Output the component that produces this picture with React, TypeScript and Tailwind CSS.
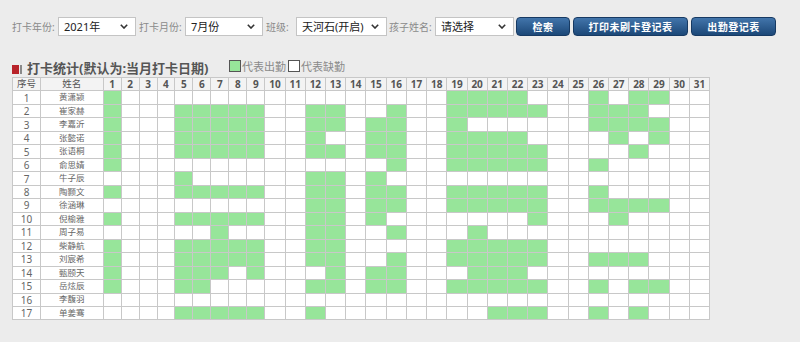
import React from "react";

const FONT = { fontFamily: '"Noto Sans", "Noto Sans CJK SC", sans-serif' };

const names = [
  "黄潇颍", "崔家赫", "李嘉沂", "张懿诺", "张语桐", "俞思婧", "牛子辰", "陶颢文", "徐涵琳",
  "倪榆雅", "周子易", "柴静航", "刘宸希", "甄颐天", "岳炫辰", "李馥羽", "单姜骞",
];

const specs = [
  "1,19-22,26,28,29",
  "1,5-9,12,13,16,19-23,26-28",
  "1,5-9,12,13,15,16,19,26-29",
  "1,5-9,12,15,16,19-22,27,29",
  "1,5-9,12,13,15,16,19-23,28",
  "1,16,19-23,26",
  "5,12,13,15",
  "1,5-9,12,13,15,16,19-23,26",
  "12,13,15,16,19-23,26-29",
  "1,5-9,12,13,15,23,27",
  "7,12,13,16,20",
  "1,5-9,12,13,19-23",
  "1,5-9,12,13,16,19-23,26-28",
  "1,5-7,9,13,15,16,20-22",
  "1,5,6,12,13,15,16,19-23,26,28,29",
  "",
  "5-9,12,21-23,26,28",
];

function parse(s: string): Set<number> {
  const out = new Set<number>();
  if (!s) return out;
  s.split(",").forEach((p) => {
    const [a, b] = p.split("-").map(Number);
    if (b === undefined) out.add(a);
    else for (let i = a; i <= b; i++) out.add(i);
  });
  return out;
}

const days = Array.from({ length: 31 }, (_, i) => i + 1);

function Chevron() {
  return (
    <svg width="8" height="5" viewBox="0 0 8 5" className="shrink-0">
      <polyline points="0.8,0.8 4,4 7.2,0.8" fill="none" stroke="#333" strokeWidth="1.6" />
    </svg>
  );
}

function Select({ w, text }: { w: string; text: string }) {
  return (
    <div
      className={`${w} h-[19px] bg-white border border-[#c4c4c4] flex items-center justify-between pl-[5px] pr-[7px] text-[11px] text-[#222] leading-none`}
    >
      <span>{text}</span>
      <Chevron />
    </div>
  );
}

function Btn({ w, text, ml }: { w: string; text: string; ml: string }) {
  return (
    <div
      className={`${w} ${ml} h-[19px] rounded-[4px] border border-[#173a63] bg-linear-to-b from-[#4275ab] to-[#1c4878] flex items-center justify-center text-white text-[10px] font-bold tracking-[0.5px] leading-none`}
    >
      {text}
    </div>
  );
}

export default function App() {
  return (
    <div className="w-[800px] h-[342px] bg-[#ececec] overflow-hidden" style={FONT}>
      {/* filter bar */}
      <div className="flex items-center pl-[12px] pt-[17px] h-[36px]">
        <span className="w-[46px] text-[10px] text-[#8a8a8a] leading-none">打卡年份:</span>
        <Select w="w-[78px]" text="2021年" />
        <span className="w-[49px] pl-[3px] text-[10px] text-[#8a8a8a] leading-none">打卡月份:</span>
        <Select w="w-[78px]" text="7月份" />
        <span className="w-[33px] pl-[3px] text-[10px] text-[#8a8a8a] leading-none">班级:</span>
        <Select w="w-[91px]" text="天河石(开启)" />
        <span className="w-[48px] pl-[2px] text-[10px] text-[#8a8a8a] leading-none">孩子姓名:</span>
        <Select w="w-[79px]" text="请选择" />
        <Btn w="w-[54px]" ml="ml-[2px]" text="检索" />
        <Btn w="w-[115px]" ml="ml-[3px]" text="打印未刷卡登记表" />
        <Btn w="w-[85px]" ml="ml-[3px]" text="出勤登记表" />
      </div>

      {/* title row */}
      <div className="flex items-end h-[18px] mt-[23px] pl-[12px]">
        <div className="flex items-center h-[18px] w-[15px]">
          <div className="w-[7px] h-[9px] bg-[#b8232a] mt-[2px]" />
          <div className="w-[2px] h-[9px] bg-[#8a8a8a] ml-px mt-[2px]" />
        </div>
        <span className="w-[202px] text-[13px] font-bold text-[#555] leading-[18px] whitespace-nowrap">
          打卡统计(默认为:当月打卡日期)
        </span>
        <div className="flex items-center h-[18px] mb-[2px]">
          <div className="w-[12px] h-[12px] bg-[#97e59a] border border-[#555]" />
          <span className="text-[11px] text-[#8a8a8a] leading-none ml-px">代表出勤</span>
          <div className="w-[12px] h-[12px] bg-white border border-[#555] ml-[2px]" />
          <span className="text-[11px] text-[#8a8a8a] leading-none ml-px">代表缺勤</span>
        </div>
      </div>

      {/* table */}
      <div className="ml-[12px] w-fit grid gap-px p-px bg-[#c8c8c8] grid-cols-[27px_61.6px_repeat(9,16.97px)_repeat(22,19.23px)] auto-rows-[12.47px]">
        <div className="bg-[#f3f3f3] flex items-center justify-center text-[9.5px] text-[#555] leading-none">序号</div>
        <div className="bg-[#f3f3f3] flex items-center justify-center text-[9.5px] text-[#555] leading-none">姓名</div>
        {days.map((d) => (
          <div
            key={`h${d}`}
            className="bg-[#f3f3f3] flex items-center justify-center text-[10px] font-bold text-[#555] leading-none"
          >
            {d}
          </div>
        ))}
        {names.map((n, i) => {
          const g = parse(specs[i]);
          return (
            <React.Fragment key={n}>
              <div className="bg-white flex items-center justify-center text-[10px] text-[#666] leading-none">
                {i + 1}
              </div>
              <div className="bg-white flex items-center justify-center text-[8.5px] text-[#666] leading-none">
                {n}
              </div>
              {days.map((d) => (
                <div key={d} className={g.has(d) ? "bg-[#97e59a]" : "bg-white"} />
              ))}
            </React.Fragment>
          );
        })}
      </div>
    </div>
  );
}
